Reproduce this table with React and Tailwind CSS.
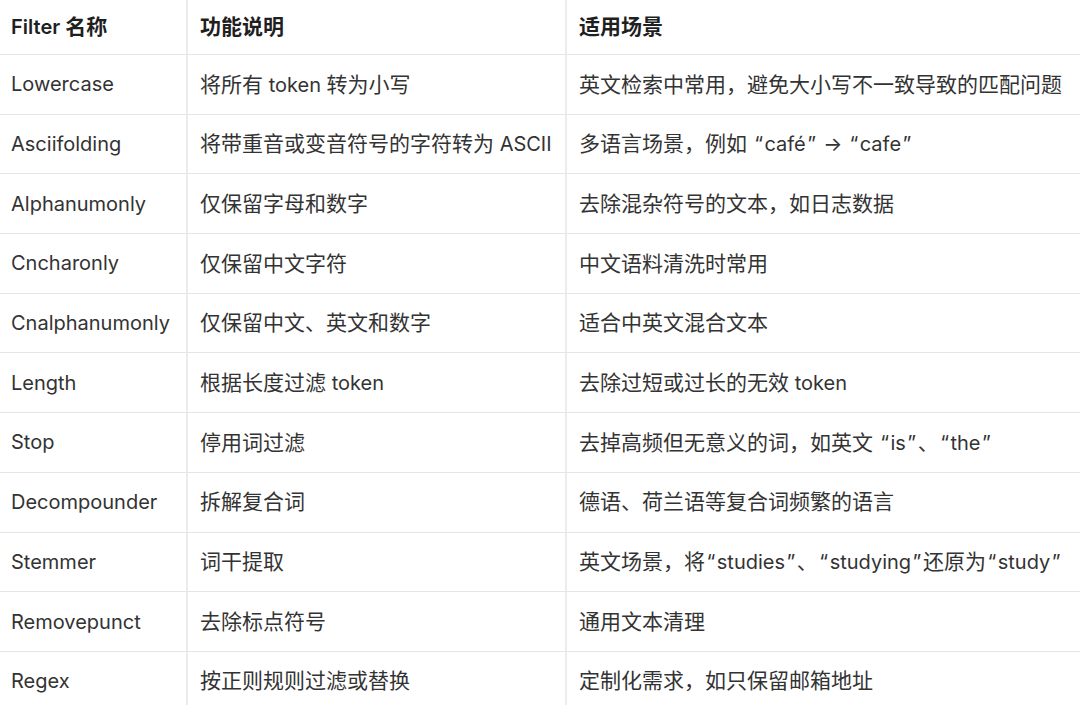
import React from "react";

const rows = [
  ["Lowercase", "将所有 token 转为小写", "英文检索中常用，避免大小写不一致导致的匹配问题"],
  ["Asciifolding", "将带重音或变音符号的字符转为 ASCII", "多语言场景，例如 “café” → “cafe”"],
  ["Alphanumonly", "仅保留字母和数字", "去除混杂符号的文本，如日志数据"],
  ["Cncharonly", "仅保留中文字符", "中文语料清洗时常用"],
  ["Cnalphanumonly", "仅保留中文、英文和数字", "适合中英文混合文本"],
  ["Length", "根据长度过滤 token", "去除过短或过长的无效 token"],
  ["Stop", "停用词过滤", "去掉高频但无意义的词，如英文 “is”、“the”"],
  ["Decompounder", "拆解复合词", "德语、荷兰语等复合词频繁的语言"],
  ["Stemmer", "词干提取", "英文场景，将“studies”、“studying”还原为“study”"],
  ["Removepunct", "去除标点符号", "通用文本清理"],
  ["Regex", "按正则规则过滤或替换", "定制化需求，如只保留邮箱地址"],
];

// CJK glyphs are a touch wider than the latin text in the screenshot
const Txt = ({ children }) => {
  const parts = children.split(/([\u3000-\u303f\u4e00-\u9fff\uff00-\uffef]+|[“”])/);
  return (
    <span className="whitespace-nowrap">
      {parts.map((p, i) => {
        if (!p) return null;
        if (p === "“" || p === "”") return <span key={i} className="px-[1.5px]">{p}</span>;
        if (/[\u3000-\u303f\u4e00-\u9fff\uff00-\uffef]/.test(p))
          return <span key={i} className="text-[21px]">{p}</span>;
        return <span key={i}>{p}</span>;
      })}
    </span>
  );
};

export default function App() {
  return (
    <div
      className="w-[1080px] h-[705px] overflow-hidden bg-white text-[20px] text-[#333333]"
      style={{ fontFamily: '"Inter", "Noto Sans CJK SC", sans-serif' }}
    >
      <div className="grid grid-cols-[188px_379px_1fr] h-[55px] border-b border-[#e6e6ea] font-semibold text-[#1f1f1f]">
        <div className="flex items-center pl-[11px] border-r-2 border-[#ececef]"><Txt>Filter 名称</Txt></div>
        <div className="flex items-center pl-[12px] border-r-2 border-[#ececef]"><Txt>功能说明</Txt></div>
        <div className="flex items-center pl-[12px]"><Txt>适用场景</Txt></div>
      </div>
      {rows.map((r) => (
        <div
          key={r[0]}
          className="grid grid-cols-[188px_379px_1fr] h-[59.7px] border-b border-[#e6e6ea]"
        >
          <div className="flex items-center pl-[11px] border-r-2 border-[#ececef]"><Txt>{r[0]}</Txt></div>
          <div className="flex items-center pl-[12px] border-r-2 border-[#ececef]"><Txt>{r[1]}</Txt></div>
          <div className="flex items-center pl-[12px]"><Txt>{r[2]}</Txt></div>
        </div>
      ))}
    </div>
  );
}
